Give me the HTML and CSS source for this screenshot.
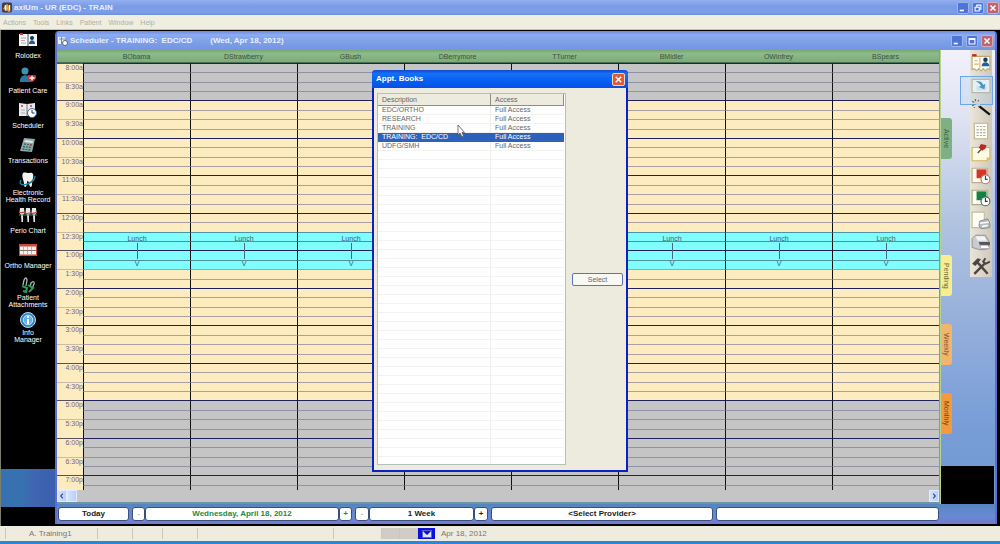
FILE: index.html
```html
<!DOCTYPE html>
<html lang="en">
<head>
<meta charset="utf-8">
<title>axiUm - UR (EDC) - TRAIN</title>
<link rel="stylesheet" href="styles.css">
</head>
<body>
<header class="app-title">
  <svg class="app-icon" viewBox="0 0 12 12"><rect width="12" height="12" rx="2" fill="#4a3a38"/><path d="M1 8l3-5 2 5zM7 11V4l3-1v8z" fill="#e8a23c"/><path d="M4 3v7M6 2v8M9 3v6" stroke="#fff" stroke-width="1.3"/></svg>
  <h1 class="caption">axiUm - UR (EDC) - TRAIN</h1>
  <div class="controls">
    <button class="ctl" aria-label="Minimize"><svg viewBox="0 0 12 12"><path d="M2 9h5" stroke="#fff" stroke-width="2"/></svg></button>
    <button class="ctl" aria-label="Restore"><svg viewBox="0 0 12 12"><path d="M4.5 4.500V2.500h5v5h-2M2.500 5h5v4.500h-5z" fill="none" stroke="#fff" stroke-width="1.3"/></svg></button>
    <button class="ctl ctl-close" aria-label="Close"><svg viewBox="0 0 12 12"><path d="M3 3l6 6M9 3l-6 6" stroke="#fff" stroke-width="1.8"/></svg></button>
  </div>
</header>
<nav class="menu">
  <button>Actions</button><button>Tools</button><button>Links</button><button>Patient</button><button>Window</button><button>Help</button>
</nav>

<main class="workspace">
  <nav class="sidebar">
    <a class="module" href="#rolodex"><svg viewBox="0 0 18 16"><path d="M0 2h18v12H0z" fill="#f6f6f6"/><path d="M9 2v12" stroke="#555"/><path d="M1 2h3" stroke="#c33" stroke-width="2"/><path d="M2 6h5M2 8.500h4M2 11h5" stroke="#aaa"/><circle cx="13" cy="6" r="2" fill="#16304f"/><path d="M10 12c0-5 6-5 6 0z" fill="#1c5c9c"/></svg><span>Rolodex</span></a>
    <a class="module" href="#care"><svg viewBox="0 0 18 16"><circle cx="6" cy="4" r="3.500" fill="#3e93b4"/><path d="M1 15c-1-9 11-9 11 0z" fill="#2878a0"/><path d="M13 15c-8-5-4-9 0-6 4-3 7 2 0 6z" fill="#d83030"/><path d="M13 8.500v5M10.500 11h5" stroke="#fff" stroke-width="1.3"/></svg><span>Patient Care</span></a>
    <a class="module" href="#scheduler"><svg viewBox="0 0 18 16"><path d="M0 1l8 1 8-1v13H0z" fill="#e9e9ec"/><path d="M8 2v12" stroke="#777"/><path d="M2 4h2M11 4h2" stroke="#c66" stroke-width="2"/><path d="M2 8h4M2 11h4" stroke="#aaa"/><circle cx="13" cy="11" r="4.500" fill="#fff" stroke="#35699c"/><path d="M13 8v3h2.500" fill="none" stroke="#234"/></svg><span>Scheduler</span></a>
    <a class="module" href="#transactions"><svg viewBox="0 0 18 16"><path d="M5 1l11 1-3 13-12-1z" fill="#8fa9a9"/><path d="M6 3l8 1-.5 2-8-1z" fill="#dce9e7"/><path d="M5 7l8 1M4 9.500l8 1M3.500 12l8 1" stroke="#3a6868" stroke-width="1.4" stroke-dasharray="2 1"/><path d="M11 8l1 .2" stroke="#d33" stroke-width="1.5"/></svg><span>Transactions</span></a>
    <a class="module" href="#ehr"><svg viewBox="0 0 18 16"><path d="M4 1c2-1 4 0 5 0s4-1 5 1c1 4-1 5-1 10 0 5-3 3-3-1-1-3-2-2-2 0 0 4-3 6-3 1 0-4-3-7-1-11z" fill="#f3f3ef"/><path d="M2 8c-5 8 13 5 14-3M1 11c3 5 15-2 15-7" fill="none" stroke="#1b87a4" stroke-width="1.3"/></svg><span>Electronic<br>Health Record</span></a>
    <a class="module" href="#perio"><svg viewBox="0 0 18 16"><path d="M1 1h4l.5 5L4 8v7H2.500L2 8 .5 6zM7 1h4l.5 5L10 8v7H8.500L8 8 6.500 6zM13 1h4l.5 5L16 8v7h-1.500L14 8l-1.500-2z" fill="#e6e6e2"/><path d="M0 5c3 2 4-1 6 1s4-1 6 0 4 0 6-1" fill="none" stroke="#c44" stroke-width="1.3"/><path d="M0 8h18" stroke="#3c8a70"/></svg><span>Perio Chart</span></a>
    <a class="module" href="#ortho"><svg viewBox="0 0 18 16"><path d="M0 2h18v12H0z" fill="#c84a38"/><path d="M1 4.500h16v3.500H1zM1 9h16v3.500H1z" fill="#f6efec"/><path d="M4.500 4v9M8.500 4v9M12.500 4v9" stroke="#c99a90" stroke-width=".8"/><path d="M1 8.500h16" stroke="#777" stroke-width=".8"/></svg><span>Ortho Manager</span></a>
    <a class="module" href="#attachments"><svg viewBox="0 0 18 16"><path d="M4 8L5 3q2-4 3 0L7 9M11 10l1-4q4-3 3 1l-2 5" fill="none" stroke="#a7b8b0" stroke-width="1.3"/><path d="M3 9l5 2-1 4-3-1M9 8l5 3-4 4" fill="none" stroke="#27a056" stroke-width="2"/></svg><span>Patient<br>Attachments</span></a>
    <a class="module" href="#info"><svg viewBox="0 0 18 16"><circle cx="9" cy="8" r="7.500" fill="#2b83cd" stroke="#b7d9f2"/><circle cx="9" cy="8" r="4.800" fill="#65aee6" stroke="#fff" stroke-width=".7"/><path d="M9 7v5M9 4v1.800" stroke="#fff" stroke-width="2"/></svg><span>Info<br>Manager</span></a>
    <div class="sidebar-fill"></div>
  </nav>

  <section class="window">
    <header class="window-title">
      <svg class="window-icon" viewBox="0 0 10 10"><path d="M0 1h7v7H0z" fill="#eef"/><path d="M3.500 1v7M1 3h6" stroke="#7889b8"/><circle cx="7" cy="7" r="2.500" fill="#fff" stroke="#567"/></svg>
      <h2 class="caption">Scheduler - TRAINING:&nbsp; EDC/CD</h2>
      <span class="caption caption-date">(Wed, Apr 18, 2012)</span>
      <div class="controls">
        <button class="ctl" aria-label="Minimize"><svg viewBox="0 0 12 12"><path d="M2 9h5" stroke="#fff" stroke-width="2"/></svg></button>
        <button class="ctl" aria-label="Maximize"><svg viewBox="0 0 12 12"><path d="M2.500 3h7v6.500h-7zM2.500 4h7" fill="none" stroke="#fff" stroke-width="1.3"/></svg></button>
        <button class="ctl ctl-close" aria-label="Close"><svg viewBox="0 0 12 12"><path d="M3 3l6 6M9 3l-6 6" stroke="#fff" stroke-width="1.8"/></svg></button>
      </div>
    </header>

    <div class="window-body">
      <div class="schedule">
        <table class="planner">
          <thead><tr><th class="time-head"></th><th>BObama</th><th>DStrawberry</th><th>GBush</th><th>DBerrymore</th><th>TTurner</th><th>BMidler</th><th>OWinfrey</th><th>BSpears</th></tr></thead>
          <tbody id="slots"></tbody>
        </table>
        <div class="scroller">
          <button class="scroll-btn" aria-label="Scroll left"><svg viewBox="0 0 10 10"><path d="M6 2L3.500 5 6 8" fill="none" stroke="#3c5688" stroke-width="1.6"/></svg></button>
          <span class="scroll-thumb"></span>
          <button class="scroll-btn scroll-right" aria-label="Scroll right"><svg viewBox="0 0 10 10"><path d="M4 2l2.500 3L4 8" fill="none" stroke="#3c5688" stroke-width="1.6"/></svg></button>
        </div>
      </div>

      <aside class="side">
        <div class="side-main">
          <div class="tabs">
            <button class="tab tab-active">Active</button>
            <button class="tab tab-pending">Pending</button>
            <button class="tab tab-weekly">Weekly</button>
            <button class="tab tab-monthly">Monthly</button>
          </div>
          <div class="tools">
            <button class="tool" aria-label="Rolodex"><svg viewBox="0 0 18 18"><path d="M1 3h16v12l-2-1-2 2-2-2-2 2-2-2-2 2-2-2-2 1z" fill="#fffef4" stroke="#b9a870"/><path d="M1 2h4" stroke="#c22" stroke-width="2"/><path d="M3 7h3M3 10h4M8 4v10" stroke="#dfae70"/><circle cx="13" cy="6" r="2" fill="#123c64"/><path d="M9.500 12c0-5 7-5 7 0z" fill="#1b639c"/></svg></button>
            <button class="tool tool-current" aria-label="Open book"><svg viewBox="0 0 18 18"><path d="M1 3h16v12H1z" fill="#fbfbf4" stroke="#bcb38e"/><path d="M5 9h9v4H5z" fill="#dae6ec"/><path d="M4 5c4-1 6 0 7 3l2-1-1 5-5-2 2-1c-1-2-2-3-5-4z" fill="#2686ac"/></svg></button>
            <button class="tool" aria-label="Wand"><svg viewBox="0 0 18 18"><path d="M7 7l10 8" stroke="#111" stroke-width="2"/><path d="M5 5l3 2" stroke="#ccc" stroke-width="2"/><path d="M1 3l2 1M4 1v2M1 7l2-1M6 3l1-1M3 9V8" stroke="#666"/></svg></button>
            <button class="tool" aria-label="List"><svg viewBox="0 0 18 18"><path d="M3 2h12v14H3z" fill="#fefdf2" stroke="#bdb58f"/><path d="M5 5h8M5 8h8M5 10.500h8M5 13h8" stroke="#a9a9a9" stroke-dasharray="2 1"/></svg></button>
            <button class="tool" aria-label="Pin note"><svg viewBox="0 0 18 18"><path d="M1 4h16v10l-3 2H1z" fill="#fffbe4" stroke="#d4b45d"/><path d="M14 16v-3h3" fill="#e3bd54"/><path d="M6 9l4-4" stroke="#555" stroke-width="1.3"/><path d="M9 1l5 1-1 3-3 2-3-3z" fill="#bb291c"/></svg></button>
            <button class="tool" aria-label="Appointment in red"><svg viewBox="0 0 18 18"><path d="M1 2h14v13H1z" fill="#fffdf1" stroke="#c3ab8a"/><path d="M5 3h9v8H5z" fill="#d33528"/><circle cx="13" cy="12" r="4" fill="#fff" stroke="#a77b75"/><path d="M13 9v3h2" fill="none" stroke="#444"/></svg></button>
            <button class="tool" aria-label="Appointment in green"><svg viewBox="0 0 18 18"><path d="M1 2h14v13H1z" fill="#fffdf1" stroke="#a9ab8a"/><path d="M5 3h9v8H5z" fill="#158040"/><circle cx="13" cy="12" r="4" fill="#fff" stroke="#44656b"/><path d="M13 9v3h2" fill="none" stroke="#333"/></svg></button>
            <button class="tool" aria-label="Print page"><svg viewBox="0 0 18 18"><path d="M1 1h11v14H1z" fill="#fffef6" stroke="#c5bd98"/><path d="M8 9l7-2 2 4v4l-8 1-2-3z" fill="#b9bbc2" stroke="#7c7f88" stroke-width=".7"/><path d="M8 11l8-1M10 14l5-1" stroke="#fff" stroke-width="1.3"/></svg></button>
            <button class="tool" aria-label="Print"><svg viewBox="0 0 18 18"><path d="M1 5l3-3h9l3 5v7l-4 1H8l-7-2z" fill="#c9cad2" stroke="#8a8c94" stroke-width=".8"/><path d="M4 3h8l2 4H6z" fill="#f3f3f6"/><path d="M7 8h10v3H8z" fill="#55565c"/><path d="M8 11h7l2 3H9z" fill="#fff" stroke="#999" stroke-width=".6"/></svg></button>
            <button class="tool" aria-label="Setup"><svg viewBox="0 0 18 18"><path d="M3 16L12 7M6 6l9 10" stroke="#4a4542" stroke-width="2.2"/><path d="M1 7l5-5 3 1-5 6z" fill="#4a4542"/><path d="M13 2l-2 3 2 2 4-2" fill="none" stroke="#4a4542" stroke-width="1.8"/></svg></button>
          </div>
        </div>
        <div class="side-end"></div>
      </aside>
    </div>

    <footer class="navbar">
      <button class="pill">Today</button><span></span>
      <button class="pill minor">-</button><button class="pill date">Wednesday, April 18, 2012</button><button class="pill date">+</button><span></span>
      <button class="pill minor">-</button><button class="pill">1 Week</button><button class="pill">+</button><span></span>
      <button class="pill">&lt;Select Provider&gt;</button><span></span>
      <button class="pill" aria-label="Filter"></button>
    </footer>
  </section>

  <section class="dialog" role="dialog" aria-labelledby="dlg-title">
    <header class="dialog-title">
      <h2 id="dlg-title" class="dialog-caption">Appt. Books</h2>
      <button class="dialog-close" aria-label="Close"><svg viewBox="0 0 12 12"><path d="M3 3l6 6M9 3l-6 6" stroke="#fff" stroke-width="1.6"/></svg></button>
    </header>
    <div class="dialog-body">
      <div class="list">
        <table class="books">
          <thead><tr><th>Description</th><th>Access</th></tr></thead>
          <tbody>
            <tr><td>EDC/ORTHO</td><td>Full Access</td></tr>
            <tr><td>RESEARCH</td><td>Full Access</td></tr>
            <tr><td>TRAINING</td><td>Full Access</td></tr>
            <tr class="selected"><td>TRAINING:&nbsp; EDC/CD</td><td>Full Access</td></tr>
            <tr><td>UDFG/SMH</td><td>Full Access</td></tr>
          </tbody>
        </table>
        <div class="list-rest"></div>
      </div>
      <button class="select-btn">Select</button>
    </div>
    <svg class="pointer" viewBox="0 0 8 14"><path d="M1 1v10l2-2 2 4 1.500-1L5 8.500h2.500z" fill="#fff" stroke="#555" stroke-width=".8"/></svg>
  </section>
</main>

<footer class="status">
  <span class="cell cell-edge"></span><span class="cell cell-user">A. Training1</span><span class="cell cell-a"></span><span class="cell cell-b"></span><span class="cell cell-a"></span><span class="cell cell-wide"></span><span class="cell cell-gap"></span>
  <span class="cell cell-gray"></span><span class="cell cell-gray"></span>
  <button class="mail" aria-label="Messages"><svg viewBox="0 0 10 8"><path d="M.5.500h9v7h-9zM.5.500L5 5 9.500.500" fill="#dfe3ff" stroke="#5a62c8"/></svg></button>
  <span class="cell-date">Apr 18, 2012</span>
</footer>
<div class="taskbar"></div>
<script src="slots.js"></script>
</body>
</html>
```
FILE: slots.js
```js
(function () {
  var body = document.getElementById('slots');
  var providers = 8;
  // Quarter-hour row heights, alternating between odd and even hours.
  var heights = [['s', 'l', 's', 's'], ['l', 's', 'l', 's']];
  for (var q = 0; q < 46; q++) {
    var hour = 8 + Math.floor(q / 4);
    var part = q % 4;
    var row = document.createElement('tr');
    var size = q === 45 ? 'end' : heights[(hour - 8) % 2][part];
    row.className = 'slot slot-' + size;
    if (part === 0) row.className += ' hour';
    if (hour < 9 || hour >= 17) row.className += ' closed';
    if (q >= 18 && q < 22) row.className += ' lunch';
    if (part % 2 === 0) {
      var th = document.createElement('th');
      th.rowSpan = 2;
      th.className = 'time';
      th.textContent = ((hour - 1) % 12 + 1) + (part ? ':30' : ':00') + (hour < 12 ? 'a' : 'p');
      row.appendChild(th);
    }
    for (var c = 0; c < providers; c++) {
      var td = document.createElement('td');
      if (q === 18) {
        td.className = 'booked';
        td.innerHTML = '<div class="event"><span>Lunch</span><i></i><span>V</span></div>';
      }
      row.appendChild(td);
    }
    body.appendChild(row);
  }
})();
```
FILE: styles.css
```css
* { box-sizing: border-box; }
body {
  margin: 0;
  min-height: 100vh;
  display: flex;
  flex-direction: column;
  background: #000;
  font: 7px/9px "Liberation Sans", Arial, sans-serif;
  color: #666;
}
h1, h2 { margin: 0; }
button { font: inherit; color: inherit; border: 0; padding: 0; margin: 0; background: none; }
svg { display: block; }

.app-title {
  display: flex;
  align-items: center;
  height: 15px;
  padding: 0 1px 0 2px;
  background: linear-gradient(#92b0f2, #7b9be4 40%, #7d9ee8 80%, #7090d8);
}
.app-icon { width: 10px; height: 11px; margin-right: 2px; }
.caption { font: bold 8px/12px "Liberation Sans", Arial, sans-serif; color: #e6eeff; white-space: nowrap; }
.controls { display: flex; gap: 3px; margin-left: auto; }
.ctl { width: 12px; height: 12px; border: 1px solid #9cb5f0; border-radius: 2px; background: #4d74d6; }
.ctl svg { width: 10px; height: 10px; }
.ctl-close { background: #bd6470; border-color: #d8a9bd; }

.menu { display: flex; gap: 7px; height: 15px; padding: 0 3px; align-items: center; background: #efeee0; border-bottom: 1px solid #c4c4b8; color: #b0b0a4; }

.workspace { position: relative; flex: 1; display: flex; border-left: 1px solid #77806f; background: #000; padding: 1px 3px 2px 0; }
.sidebar { width: 54px; display: flex; flex-direction: column; background: #000; }
.module { height: 35px; padding-top: 1px; display: flex; flex-direction: column; align-items: center; color: #fff; text-decoration: none; }
.module svg { width: 18px; height: 16px; flex: none; }
.module span { display: flex; align-items: center; min-height: 15px; line-height: 7px; text-align: center; white-space: nowrap; }
.sidebar-fill { height: 38px; margin: auto 0 17px; background: linear-gradient(90deg, #3871b0 40%, #3f66b0 60%, #3a5fae); }

.window { flex: 1; min-width: 0; display: flex; flex-direction: column; border: solid #5c6fd0; border-width: 0 2px 0 2px; border-radius: 4px 4px 0 0; background: #6789cf; }
.window-title { display: flex; align-items: center; height: 19px; padding: 0 2px 0 1px; background: linear-gradient(#6c8ae0, #8cabf0 20%, #7a9ce6 70%, #7496e0); border-radius: 3px 3px 0 0; }
.window-icon { width: 10px; height: 10px; margin-right: 2px; }
.caption-date { margin-left: 18px; }
.window-body { flex: 1; display: flex; min-height: 0; }
.schedule { flex: 1; min-width: 0; border-right: 1px solid #7aa777; border-bottom: 2px solid #6c95a3; background: #c5c5c5; }

.planner { width: 100%; table-layout: fixed; border-collapse: separate; border-spacing: 0; }
.planner th, .planner td { padding: 0; font-weight: normal; }
.planner thead th { height: 13px; line-height: 11px; color: #3c533c; background: linear-gradient(#7aa578, #8dbb89 30%, #7cab78); border-bottom: 1px solid #466f58; }
.planner .time-head { width: 26px; }
.slot-s { height: 9px; }
.slot-l { height: 10px; }
.slot-end { height: 5px; }
.slot td { position: relative; height: inherit; line-height: 0; background: #fdecc0; border-top: 1px solid #aaa0a6; border-left: 1px solid #111; }
.closed td { background: #c5c5c5; border-top-color: #9292a6; }
.lunch td { background: #80fdfd; border-top-color: #4c94a4; }
.slot.hour td { border-top-color: #20205c; }
.slot .time { vertical-align: top; text-align: right; line-height: 8px; color: #75647e; background: #fdecc0; border-top: 1px solid #c9bba6; }
.slot.hour .time { border-top-color: #55505c; }
.slot .booked { z-index: 1; }
.event { position: absolute; inset: 0 0 auto; height: 36px; display: flex; flex-direction: column; align-items: center; line-height: 9px; color: #3f5a70; padding-top: 1px; }
.event i { width: 1px; height: 16px; background: #486a80; }

.scroller { display: flex; height: 12px; }
.scroll-btn, .scroll-thumb { width: 10px; height: 12px; background: linear-gradient(90deg, #d5e2ff, #b9cdf8); border: 1px solid #dfe9ff; }
.scroll-btn svg { width: 8px; height: 10px; }
.scroll-right { margin-left: auto; }

.side { width: 55px; display: flex; flex-direction: column; border-left: 1px solid #b5d493; background: linear-gradient(#f1f1fa, #dfe2f2 15%, #b0c4e0 38%, #9cb3dc 55%, #7b9fd8 80%, #6e97d0); }
.side-main { flex: 1; display: flex; justify-content: space-between; padding-right: 3px; }
.side-end { height: 38px; background: #000; margin-right: 1px; }
.tabs { display: flex; flex-direction: column; gap: 28px; padding-top: 68px; }
.tab { writing-mode: vertical-rl; width: 11px; height: 41px; border-radius: 0 3px 3px 0; }
.tab-active { background: #7fb083; color: #3e5e48; margin-bottom: 68px; }
.tab-pending { background: #f6ee91; color: #6b6844; }
.tab-weekly { background: #f3b46c; color: #7a5a38; }
.tab-monthly { background: #f59a3c; color: #6c451e; }
.tools { width: 22px; height: 227px; padding-top: 2px; display: flex; flex-direction: column; align-items: center; justify-content: space-around; background: linear-gradient(90deg, #e9e5d8, #cfc9bc); }
.tool { position: relative; width: 20px; height: 20px; }
.tool svg { width: 20px; height: 20px; }
.tool-current::before { content: ""; position: absolute; inset: 0 -2px -9px -11px; border: 1px solid #6ba6ea; background: #a9cdf540; }

.navbar { display: grid; grid-template-columns: 71fr 3fr 13fr 194fr 13fr 3fr 14fr 105fr 14fr 3fr 222fr 3fr 223fr; height: 20px; padding: 3px 56px 3px 1px; background: linear-gradient(#5684bd, #678ad4 60%, #7578cd); }
.pill { min-width: 0; background: #fff; border: 1px solid #37507c; border-radius: 3px; font: bold 8px/12px "Liberation Sans", Arial, sans-serif; color: #222; }
.date { color: #1d8a45; }
.minor { color: #8a9b92; font-weight: normal; }

.dialog { position: absolute; z-index: 2; top: 40px; left: 371px; right: 372px; height: 402px; display: flex; flex-direction: column; background: #ecebdd; border: 2px solid #0d20c4; border-top: 0; border-radius: 4px 4px 0 0; }
.dialog-title { display: flex; align-items: center; justify-content: space-between; height: 18px; margin: 0 -2px; padding: 0 3px 0 4px; background: linear-gradient(#1448c8, #1470fa 20%, #045cf0 70%, #0a4fe0); border-radius: 4px 4px 0 0; }
.dialog-caption { font: bold 8px/12px "Liberation Sans", Arial, sans-serif; color: #fff; }
.dialog-close { width: 13px; height: 13px; border: 1px solid #f3d2c8; border-radius: 2px; background: #e05a34; }
.dialog-close svg { width: 11px; height: 11px; }
.dialog-body { flex: 1; display: flex; gap: 6px; padding: 5px 3px; }
.list { width: 189px; display: flex; flex-direction: column; border: 1px solid #b4c1bb; background: #fff; padding-right: 1px; }
.books { width: 100%; table-layout: fixed; border-collapse: separate; border-spacing: 0; }
.books th { height: 12px; padding: 0 4px; font-weight: normal; text-align: left; background: #ecebdd; border: solid #8f8f88; border-width: 0 1px 1px 0; }
.books th:first-child { width: 113px; }
.books td { height: 9px; padding: 0 4px; line-height: 8px; border-bottom: 1px solid #f2f2ee; }
.books td:first-child { border-right: 1px solid #eeeeea; }
.books .selected td { background: #2d62bc; border-color: #2d62bc; color: #fff; }
.list-rest { flex: 1; background: linear-gradient(90deg, #0000 112px, #f0f0ee 112px, #f0f0ee 113px, #0000 113px), repeating-linear-gradient(#fff 0 8px, #f3f3f1 8px 9px); }
.select-btn { flex: 1; align-self: flex-start; height: 13px; margin-top: 180px; border: 1px solid #5a76b8; border-radius: 2px; background: #f8f8f4; }
.pointer { position: absolute; left: 83px; top: 54px; width: 8px; height: 14px; }

.status { display: flex; height: 15px; padding: 2px 0; background: #eeecdf; font-size: 8px; line-height: 12px; color: #77776e; }
.cell { border-right: 1px solid #c9c7ba; white-space: nowrap; }
.cell-edge { width: 6px; }
.cell-user { width: 92px; padding-left: 23px; }
.cell-a { width: 35px; }
.cell-b { width: 30px; }
.cell-wide { width: 136px; }
.cell-gap { width: 48px; }
.cell-gray { width: 18px; background: #cfcdc5; }
.mail { width: 17px; display: flex; align-items: center; justify-content: center; background: #0d10e0; }
.mail svg { width: 10px; height: 8px; }
.cell-date { margin-left: 6px; }
.taskbar { height: 3px; background: #2a86da; }
```
